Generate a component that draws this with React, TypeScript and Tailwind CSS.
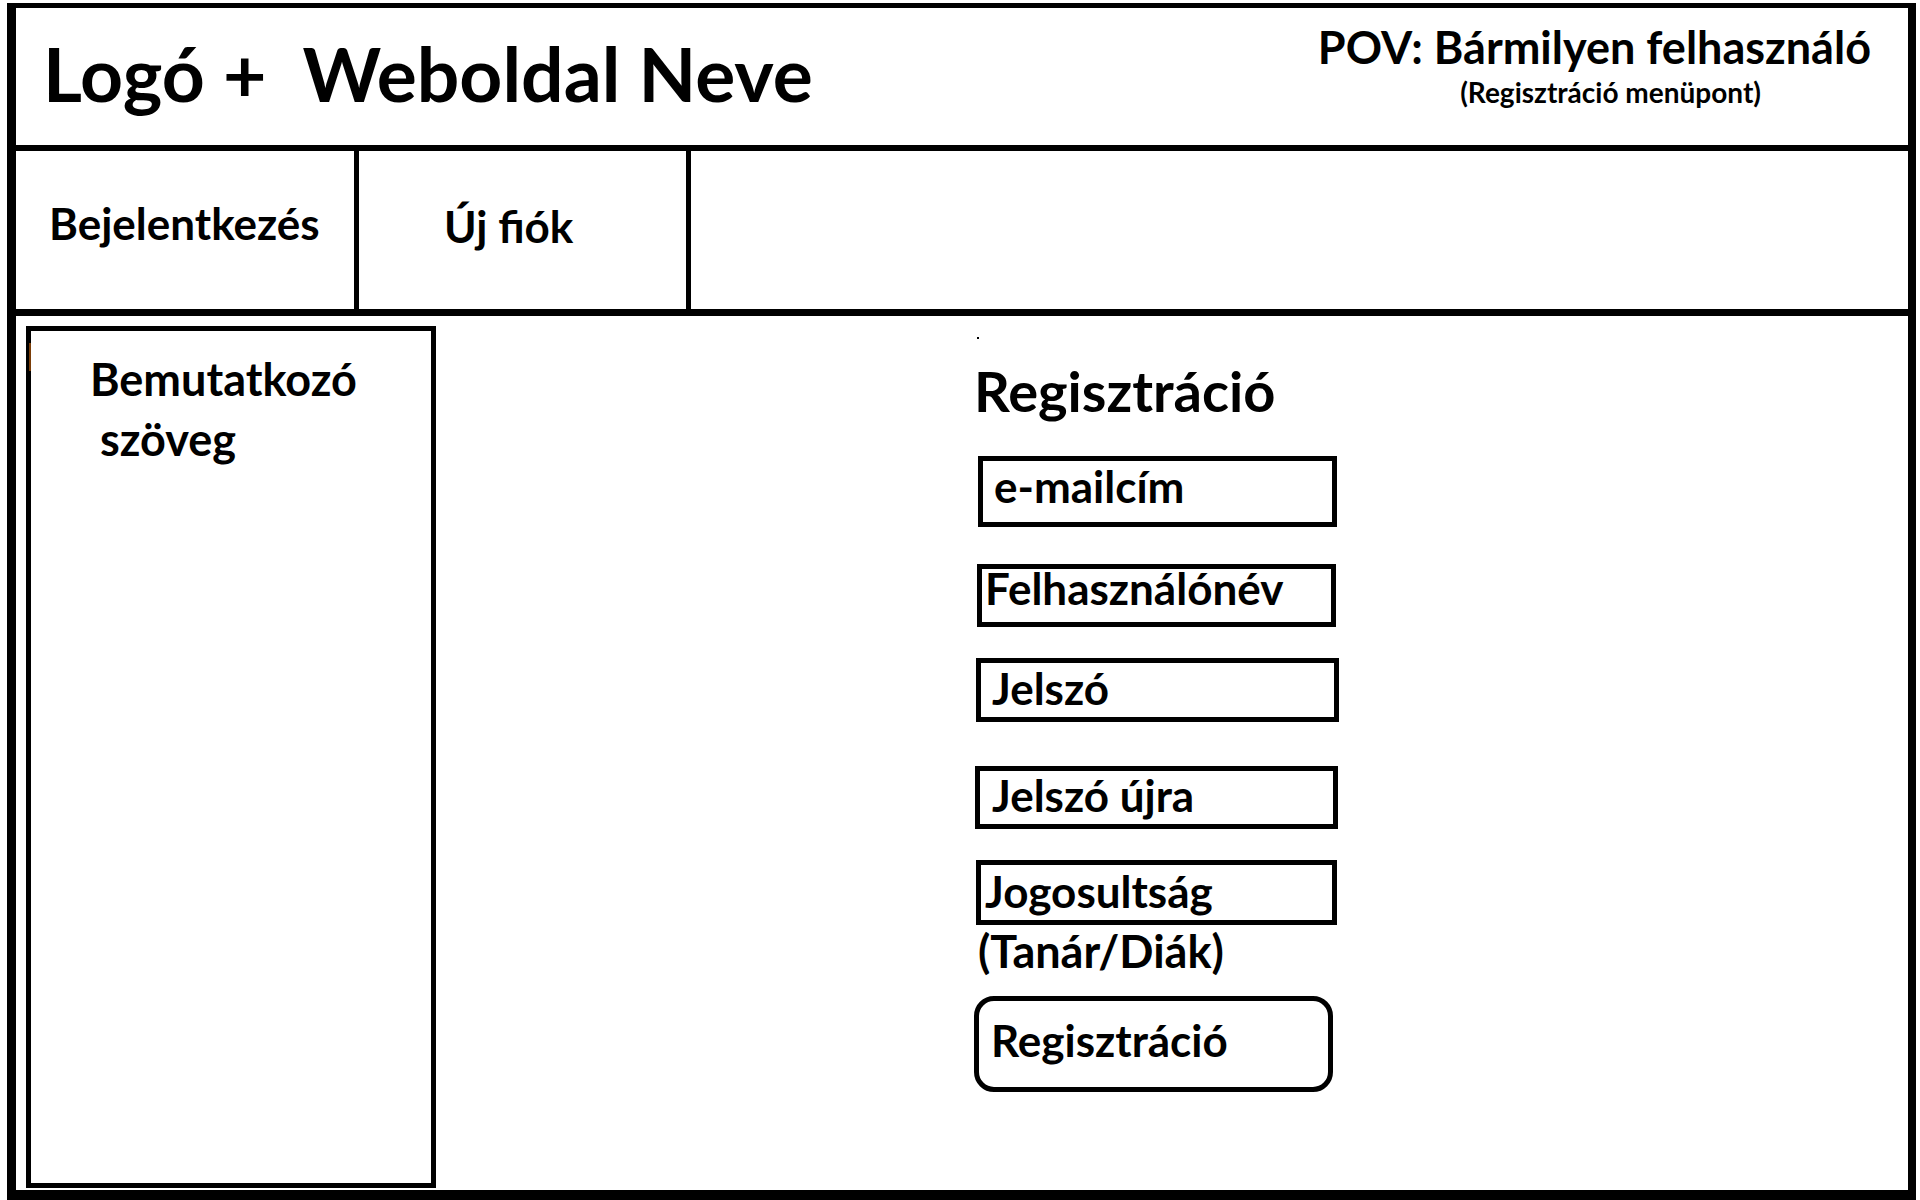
const fieldBase = "border-[5px] border-black text-[44px] font-bold leading-[36px]";

export default function App() {
  return (
    <div className="w-[1920px] h-[1200px] bg-white pl-[7px] pt-[3px] font-['Lato',sans-serif] text-black">
      <div className="w-[1909px] h-[1197px] border-l-[9px] border-t-[5px] border-r-[8px] border-b-[10px] border-black flex flex-col">
        {/* Header */}
        <div className="h-[143px] shrink-0 border-b-[6px] border-black flex justify-between">
          <div className="pl-[27px] pt-[28px] text-[75px] font-bold leading-none whitespace-pre">
            {"Logó +  Weboldal Neve"}
          </div>
          <div className="pr-[37px] pt-[17px] flex flex-col items-end">
            <div className="text-[45px] font-bold leading-none">POV: Bármilyen felhasználó</div>
            <div className="mt-[8px] mr-[110px] text-[28px] font-bold leading-none">
              (Regisztráció menüpont)
            </div>
          </div>
        </div>

        {/* Nav */}
        <div className="h-[165px] shrink-0 border-b-[7px] border-black flex">
          <div className="w-[343px] border-r-[5px] border-black pl-[33px] pt-[50px] text-[44px] font-bold leading-none">
            Bejelentkezés
          </div>
          <div className="w-[332px] border-r-[5px] border-black pl-[85px] pt-[53px] text-[44px] font-bold leading-none">
            Új fiók
          </div>
          <div className="flex-1" />
        </div>

        {/* Main */}
        <div className="flex-1 flex">
          <div className="relative ml-[10px] mt-[10px] w-[410px] h-[862px] border-[5px] border-black pl-[59px] pt-[26px] text-[45px] font-bold leading-none">
            <div className="absolute left-[-2px] top-[12px] w-[2px] h-[28px] bg-[#7a3d08]" />
            <div>Bemutatkozó</div>
            <div className="mt-[15px] pl-[10px]">szöveg</div>
          </div>

          <div className="ml-[538px] flex flex-col items-start">
            <div className="ml-[3px] mt-[21px] w-[2px] h-[2px] bg-black" />
            <div className="mt-[24px] text-[56px] font-bold leading-none">Regisztráció</div>

            <div className={`${fieldBase} ml-[4px] mt-[37px] w-[359px] h-[71px] pl-[11px] pt-[7px]`}>
              e-mailcím
            </div>
            <div className={`${fieldBase} ml-[3px] mt-[37px] w-[359px] h-[63px] pl-[3px] pt-[1px]`}>
              Felhasználónév
            </div>
            <div className={`${fieldBase} ml-[2px] mt-[31px] w-[363px] h-[64px] pl-[11px] pt-[7px]`}>
              Jelszó
            </div>
            <div className={`${fieldBase} ml-[1px] mt-[44px] w-[363px] h-[63px] pl-[12px] pt-[6px]`}>
              Jelszó újra
            </div>
            <div className={`${fieldBase} ml-[2px] mt-[31px] w-[361px] h-[65px] pl-[4px] pt-[8px]`}>
              Jogosultság
            </div>
            <div className="ml-[4px] mt-[8px] text-[45px] font-bold leading-[36px]">(Tanár/Diák)</div>
            <button className="mt-[27px] w-[359px] h-[96px] rounded-[20px] border-[5px] border-black pl-[12px] pt-[21px] text-[44px] font-bold leading-[36px] flex items-start">
              Regisztráció
            </button>
          </div>
        </div>
      </div>
    </div>
  );
}
